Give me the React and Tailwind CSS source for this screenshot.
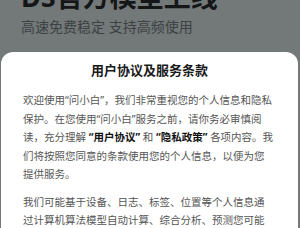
import React from 'react';

const font = { fontFamily: '"Noto Sans", "Noto Sans CJK SC", sans-serif' };

export default function App() {
  return (
    <div className="relative w-[300px] h-[228px] overflow-hidden bg-[#737879]" style={font}>
      {/* page behind the dimmed overlay */}
      <div className="px-[21px] -mt-[18px]">
        <h1 className="text-[27px] leading-[30px] font-bold text-[#141617] whitespace-nowrap">DS官方模型上线</h1>
        <p className="mt-[6px] text-[14px] leading-[18px] text-[#3c4143] whitespace-nowrap">高速免费稳定 支持高频使用</p>
      </div>

      {/* bottom sheet */}
      <div className="absolute top-[52px] left-px right-[2px] bottom-0 rounded-t-[12px] bg-white">
        <h2 className="pt-[9px] text-center text-[13px] leading-[18px] font-semibold text-[#1a1a1a]">用户协议及服务条款</h2>
        <div className="mt-[12px] pl-[22px] pr-[24px] text-[10.5px] leading-[18.5px] text-[#555555]">
          <p>
            欢迎使用“问小白”，我们非常重视您的个人信息和隐私保护。在您使用“问小白”服务之前，请你务必审慎阅读，充分理解
            <b className="font-bold text-[#111111]"> “用户协议” </b>和
            <b className="font-bold text-[#111111]"> “隐私政策” </b>
            各项内容。我们将按照您同意的条款使用您的个人信息，以便为您提供服务。
          </p>
          <p className="mt-[9px]">
            我们可能基于设备、日志、标签、位置等个人信息通过计算机算法模型自动计算、综合分析、预测您可能感兴趣的内容。
          </p>
        </div>
      </div>
    </div>
  );
}
